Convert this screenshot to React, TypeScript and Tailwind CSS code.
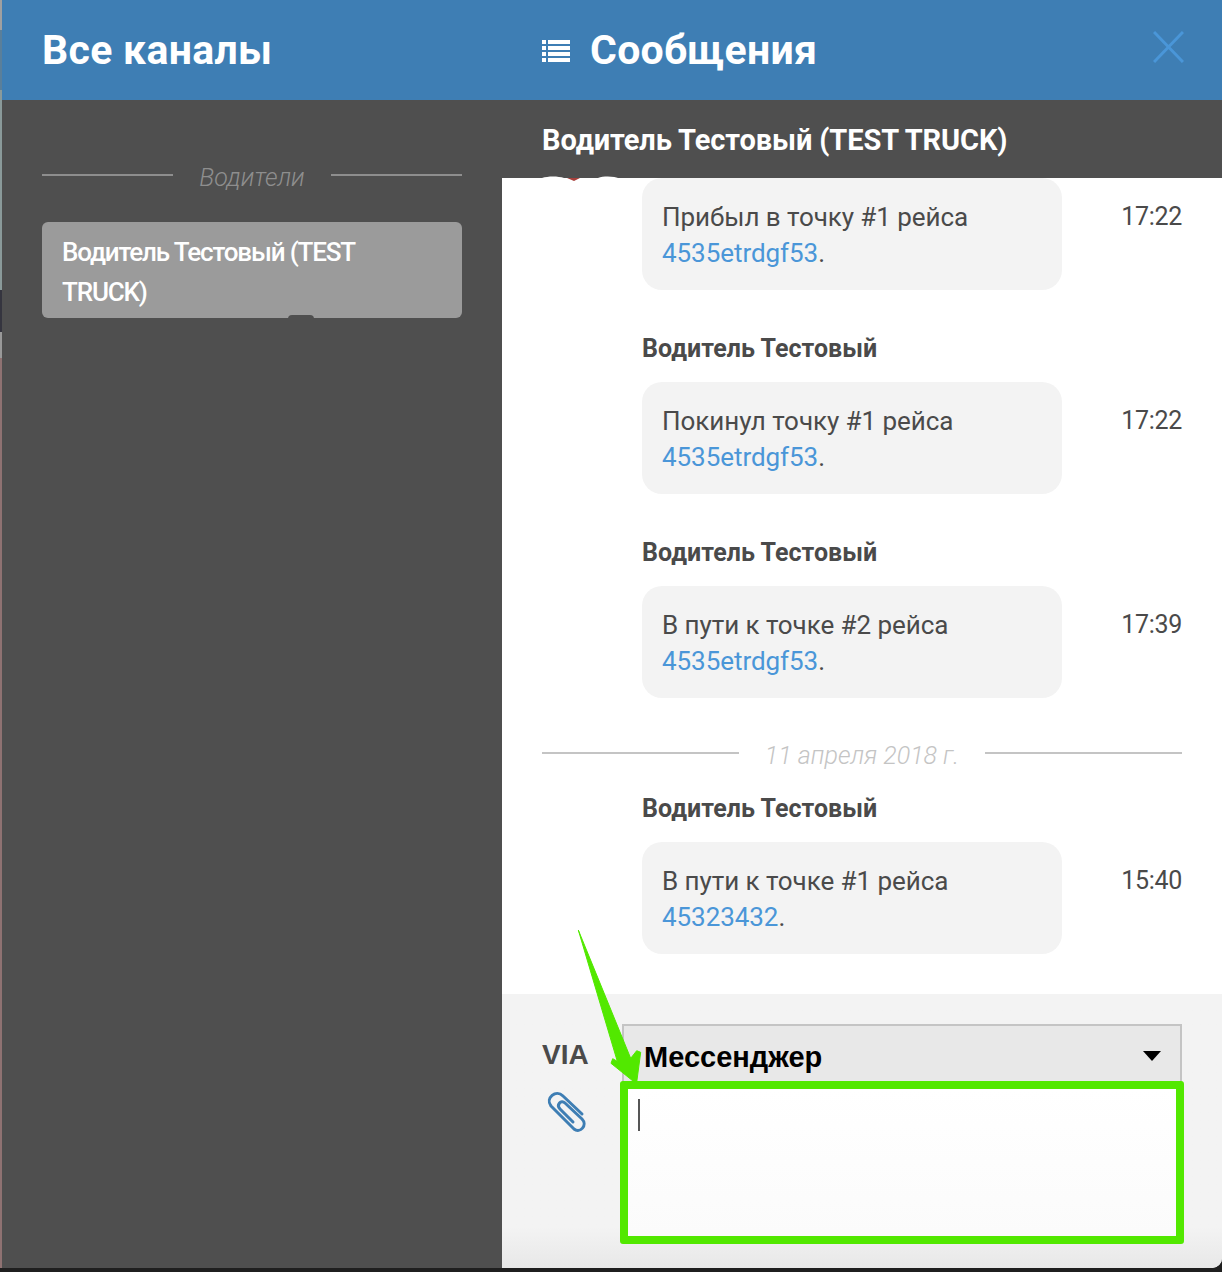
const messages = [
  { text: "Прибыл в точку #1 рейса", trip: "4535etrdgf53", time: "17:22", hideName: true },
  { text: "Покинул точку #1 рейса", trip: "4535etrdgf53", time: "17:22" },
  { text: "В пути к точке #2 рейса", trip: "4535etrdgf53", time: "17:39" },
];

function Divider({ label, lineClass, textClass }: { label: string; lineClass: string; textClass: string }) {
  return (
    <div className="flex items-start">
      <div className={`mt-[12px] h-[2px] flex-1 ${lineClass}`} />
      <div className={`px-[26px] text-[25px] leading-[32px] italic font-light ${textClass}`}>{label}</div>
      <div className={`mt-[12px] h-[2px] flex-1 ${lineClass}`} />
    </div>
  );
}

function Message({ text, trip, time, name }: { text: string; trip: string; time: string; name: boolean }) {
  return (
    <div>
      {name && (
        <div className="ml-[100px] mb-[15px] pt-[1px] text-[25px] leading-[36px] font-bold tracking-[0.05px] text-[#4a4a4a]">Водитель Тестовый</div>
      )}
      <div className="flex items-start justify-between">
        <div className="ml-[100px] h-[112px] w-[420px] rounded-[20px] bg-[#f3f3f3] px-[20px] pt-[21px] text-[26px] leading-[36px] tracking-[-0.06px] text-[#4a4a4a]">
          {text}
          <br />
          <span className="text-[#4a96d8]">{trip}</span>.
        </div>
        <div className="pt-[21px] text-[25px] leading-[36px] tracking-[-0.3px] text-[#4a4a4a]">{time}</div>
      </div>
    </div>
  );
}

export default function App() {
  return (
    <div className="relative flex h-[1272px] w-[1222px] items-start overflow-hidden bg-[#1f1f1f] font-['Roboto',sans-serif]">
      <div className="flex h-[1268px] w-[2px] shrink-0 flex-col">
        <div className="h-[30px] bg-[#a0a0a0]" />
        <div className="h-[60px] bg-[#5a7f9a]" />
        <div className="h-[200px] bg-[#8a9a9a]" />
        <div className="h-[42px] bg-[#35353f]" />
        <div className="h-[26px] bg-[#999999]" />
        <div className="flex-1 bg-[#8f7272]" />
      </div>

      <aside className="flex h-[1268px] w-[500px] shrink-0 flex-col bg-[#4f4f4f]">
        <div className="flex h-[100px] items-center bg-[#3e7eb4] pl-[40px] pt-[2px] text-[41px] font-bold tracking-[0.3px] text-white">Все каналы</div>
        <div className="px-[40px] pt-[62px]">
          <Divider label="Водители" lineClass="bg-[#8e8e8e]" textClass="text-[#8e8e8e]" />
          <div className="relative mt-[28px] h-[96px] rounded-[6px] bg-[#9b9b9b] px-[20px] py-[10px] text-[26px] leading-[40px] font-medium tracking-[-1.15px] text-white">
            Водитель Тестовый (TEST
            <br />
            TRUCK)
            <div className="absolute bottom-[-1px] left-[246px] h-[4px] w-[26px] rounded-t-full bg-[#4f4f4f]" />
          </div>
        </div>
      </aside>

      <main className="relative flex h-[1268px] w-[720px] shrink-0 flex-col overflow-hidden rounded-br-[10px] bg-white">
        <header className="flex h-[100px] shrink-0 items-center justify-between bg-[#3e7eb4] pl-[40px] pr-[38px] shadow-[-3px_0_4px_rgba(0,0,0,0.12)]">
          <div className="flex items-center gap-[20px] pt-[2px] text-[41px] font-bold tracking-[0.3px] text-white">
            <svg width="28" height="22" viewBox="0 0 28 22" fill="white">
              <rect x="0" y="0" width="4" height="4" />
              <rect x="6" y="0" width="22" height="4" />
              <rect x="0" y="6" width="4" height="4" />
              <rect x="6" y="6" width="22" height="4" />
              <rect x="0" y="12" width="4" height="4" />
              <rect x="6" y="12" width="22" height="4" />
              <rect x="0" y="18" width="4" height="4" />
              <rect x="6" y="18" width="22" height="4" />
            </svg>
            Сообщения
          </div>
          <svg width="31" height="32" viewBox="0 0 31 32" fill="none" stroke="#4a96d8" strokeWidth="3" className="mb-[6px]">
            <path d="M1 1 L30 31 M30 1 L1 31" />
          </svg>
        </header>

        <div className="flex h-[78px] shrink-0 items-center bg-[#4f4f4f] pl-[40px] pt-[3px] text-[29px] font-bold tracking-[-0.1px] text-white">
          Водитель Тестовый (TEST TRUCK)
        </div>

        <div className="h-[816px] shrink-0 overflow-hidden px-[40px]">
          <div className="flex flex-col gap-[40px]">
            {messages.map((m) => (
              <Message key={m.text} text={m.text} trip={m.trip} time={m.time} name={!m.hideName} />
            ))}
          </div>
          <div className="mt-[42px] mb-[18px]">
            <Divider label="11 апреля 2018 г." lineClass="bg-[#c4c4c4]" textClass="text-[#c4c4c4]" />
          </div>
          <Message text="В пути к точке #1 рейса" trip="45323432" time="15:40" name />
        </div>

        <div className="flex flex-1 bg-gradient-to-b from-[#f3f3f3] from-85% to-[#e8e8e8] pl-[40px] pt-[30px]">
          <div className="w-[80px] shrink-0">
            <div className="mt-[13px] font-['Liberation_Sans',sans-serif] text-[28px] leading-[36px] font-bold text-[#4a4a4a]">VIA</div>
            <svg className="-ml-[2px] mt-[12px]" width="55" height="55" viewBox="0 0 55 55" fill="none" stroke="#3e7eb4" strokeWidth="3" strokeLinecap="round" strokeLinejoin="round">
              <path d="M42 29 L23 11 C16 4 5 13 11 21 L34 44 C40 49 48 40 42 34 L25 18 C21 14 16 20 20 24 L33 37" />
            </svg>
          </div>
          <div className="w-[560px] shrink-0">
            <div className="flex h-[60px] items-start justify-between border-2 border-[#c4c4c4] bg-[#e8e8e8] pl-[20px] pr-[19px] pt-[13px] text-[29px] leading-[36px] font-bold text-black">
              <span className="font-['Liberation_Sans',sans-serif]">Мессенджер</span>
              <span className="mt-[12px] h-0 w-0 border-x-[9px] border-t-[10px] border-x-transparent border-t-black" />
            </div>
            <div className="relative z-10 -ml-[2px] -mt-[3px] h-[163px] w-[564px] rounded-[3px] border-[8px] border-[#52e800] bg-gradient-to-b from-white to-[#fbfbfb]">
              <div className="ml-[10px] mt-[10px] h-[32px] w-[2px] bg-[#555555]" />
            </div>
          </div>
        </div>
      </main>

      {/* leftover of the avatar scrolled under the header */}
      <svg className="absolute left-[540px] top-[176px] z-20" width="84" height="6" viewBox="0 0 84 6">
        <path d="M2 2 C8 0 18 0 24 2 Z M58 2 C64 0 74 0 80 3 L78 2 Z" fill="white" />
        <path d="M27 2 L40 2 L34 5 Z" fill="#a8403c" />
      </svg>

      <svg className="absolute left-[570px] top-[925px] z-20" width="80" height="165" viewBox="0 0 80 165">
        <path
          d="M8.3 5 L60.7 133.3 L66.7 125.7 L70.7 127.3 L66.7 157.3 L63.3 156.3 L41 138.3 L42.7 133.7 L47.3 136.3 Z"
          fill="#52e800"
          stroke="#52e800"
          strokeWidth="1"
          strokeLinejoin="round"
        />
      </svg>
    </div>
  );
}
